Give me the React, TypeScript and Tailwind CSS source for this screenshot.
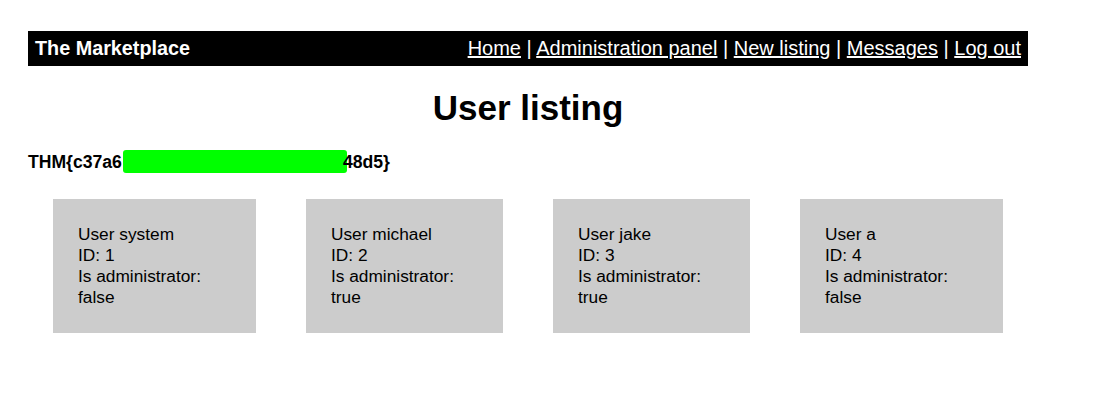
import React from 'react';

const users = [
  { name: 'system', id: 1, admin: 'false', w: 'w-[203px]' },
  { name: 'michael', id: 2, admin: 'true', w: 'w-[197px]' },
  { name: 'jake', id: 3, admin: 'true', w: 'w-[197px]' },
  { name: 'a', id: 4, admin: 'false', w: 'w-[203px]' },
];

const App: React.FC = () => {
  return (
    <div className="min-h-[402px] bg-white text-black font-['Liberation_Sans',Arial,sans-serif]">
      <div className="ml-[28px] w-[1000px] pt-[31px]">
        <div className="flex h-[35px] items-center justify-between bg-black px-[7px] text-white">
          <span className="text-[19.8px] font-bold">The Marketplace</span>
          <nav className="-mt-[2px] text-[20px]">
            <a href="#" className="underline">Home</a> |{' '}
            <a href="#" className="underline">Administration panel</a> |{' '}
            <a href="#" className="underline">New listing</a> |{' '}
            <a href="#" className="underline">Messages</a> |{' '}
            <a href="#" className="underline">Log out</a>
          </nav>
        </div>

        <h1 className="mt-[22px] text-center text-[35px] font-bold leading-[40px]">User listing</h1>

        <p className="mt-[22px] flex items-center text-[17.6px] font-bold leading-[20px]">
          <span>THM{'{'}c37a6</span>
          <span className="ml-[1px] inline-block h-[23px] w-[224px] rounded-[3px] bg-[#00ff00]" />
          <span className="-ml-[4px]">48d5{'}'}</span>
        </p>

        <div className="mt-[26px] flex gap-[50px] pl-[25px]">
          {users.map((u) => (
            <div key={u.id} className={`${u.w} bg-[#cccccc] py-[25px] pl-[25px] text-[17.3px] leading-[21px]`}>
              <div>User {u.name}</div>
              <div>ID: {u.id}</div>
              <div>Is administrator:</div>
              <div>{u.admin}</div>
            </div>
          ))}
        </div>
      </div>
    </div>
  );
};

export default App;
